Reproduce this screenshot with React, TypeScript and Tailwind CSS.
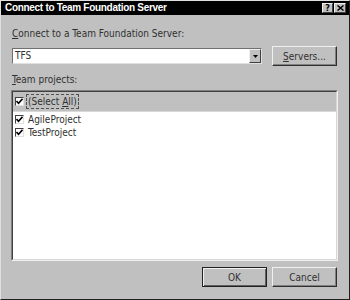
import React from "react";

const font = { fontFamily: '"DejaVu Sans Condensed", "Liberation Sans", Arial, sans-serif' };

function Check() {
  return (
    <span className="inline-flex w-[9px] h-[9px] bg-white border-t border-l border-[#404040] border-b border-r border-b-[#e0e0e0] border-r-[#e0e0e0] items-center justify-center shrink-0">
      <svg width="7" height="7" viewBox="0 0 7 7">
        <path d="M0.5 3 L2.5 5.2 L6.5 0.8" stroke="#000" strokeWidth="1.6" fill="none" />
      </svg>
    </span>
  );
}

function Button({ children, isDefault }: { children: React.ReactNode; isDefault?: boolean }) {
  return (
    <div
      className={`w-[65px] h-[20px] flex items-center justify-center bg-[#c0c0c0] text-[10px] text-[#303030] ${
        isDefault
          ? "border border-[#202020] shadow-[inset_1px_1px_0_#f0f0f0,inset_-1px_-1px_0_#606060]"
          : "border border-t-[#f0f0f0] border-l-[#f0f0f0] border-b-[#303030] border-r-[#303030] shadow-[inset_-1px_-1px_0_#808080]"
      }`}
    >
      {children}
    </div>
  );
}

export default function App() {
  return (
    <div
      className="w-[350px] h-[300px] bg-[#c0c0c0] border border-t-[#e0e0e0] border-l-[#e0e0e0] border-b-[#202020] border-r-[#202020] flex flex-col overflow-hidden"
      style={font}
    >
      {/* Title bar */}
      <div className="h-[14px] bg-black flex items-center justify-between pl-[4px] pr-[3px]">
        <span className="text-white font-bold text-[10px] tracking-[-0.3px] leading-none font-['Liberation_Sans',Arial,sans-serif]">
          Connect to Team Foundation Server
        </span>
        <div className="flex gap-[1px]">
          <div className="w-[11px] h-[10px] bg-[#c0c0c0] border border-t-[#f0f0f0] border-l-[#f0f0f0] border-b-[#404040] border-r-[#404040] flex items-center justify-center text-[9px] font-bold leading-none text-black">
            ?
          </div>
          <div className="w-[12px] h-[10px] bg-[#c0c0c0] border border-t-[#f0f0f0] border-l-[#f0f0f0] border-b-[#404040] border-r-[#404040] flex items-center justify-center">
            <svg width="7" height="6" viewBox="0 0 7 6">
              <path d="M0.5 0.5 L6.5 5.5 M6.5 0.5 L0.5 5.5" stroke="#000" strokeWidth="1.5" />
            </svg>
          </div>
        </div>
      </div>

      <div className="flex flex-col pl-[10px] pr-[12px] text-[10px] text-[#303030]">
        <div className="mt-[12px] leading-[13px] pl-[1px]">
          <u>C</u>onnect to a Team Foundation Server:
        </div>

        <div className="mt-[6px] flex items-start justify-between">
          <div className="mt-[2px] ml-[1px] w-[250px] h-[16px] bg-white border border-t-[#707070] border-l-[#707070] border-b-[#e0e0e0] border-r-[#e0e0e0] flex items-center">
            <span className="pl-[2px] leading-none">TFS</span>
            <div className="ml-auto w-[12px] h-[14px] bg-[#c0c0c0] border border-t-[#f0f0f0] border-l-[#f0f0f0] border-b-[#404040] border-r-[#404040] flex items-center justify-center">
              <svg width="5" height="3" viewBox="0 0 5 3">
                <path d="M0 0 H5 L2.5 3 Z" fill="#000" />
              </svg>
            </div>
          </div>
          <Button>
            <span>
              <u>S</u>ervers...
            </span>
          </Button>
        </div>

        <div className="mt-[7px] leading-[13px] pl-[1px]">
          <u>T</u>eam projects:
        </div>

        <div className="mt-[4px] w-[327px] h-[171px] border border-t-[#808080] border-l-[#808080] border-b-[#f0f0f0] border-r-[#f0f0f0] flex flex-col">
          <div className="flex-1 flex flex-col border border-t-[#404040] border-l-[#404040] border-b-[#d8d8d8] border-r-[#d8d8d8]">
            <div className="h-[20px] bg-[#c0c0c0] flex items-center pl-[2px] gap-[2px] border-b border-[#d8d8d8]">
              <Check />
              <span className="border border-dashed border-[#505050] px-[1px] leading-[13px]">
                (Select <u>A</u>ll)
              </span>
            </div>
            <div className="flex-1 bg-white flex flex-col pt-[1px] pl-[2px]">
              <div className="h-[13px] flex items-center gap-[4px]">
                <Check />
                <span className="leading-none">AgileProject</span>
              </div>
              <div className="h-[13px] flex items-center gap-[4px]">
                <Check />
                <span className="leading-none">TestProject</span>
              </div>
            </div>
          </div>
        </div>

        <div className="mt-[6px] flex justify-end gap-[5px]">
          <Button isDefault>OK</Button>
          <Button>Cancel</Button>
        </div>
      </div>
    </div>
  );
}
